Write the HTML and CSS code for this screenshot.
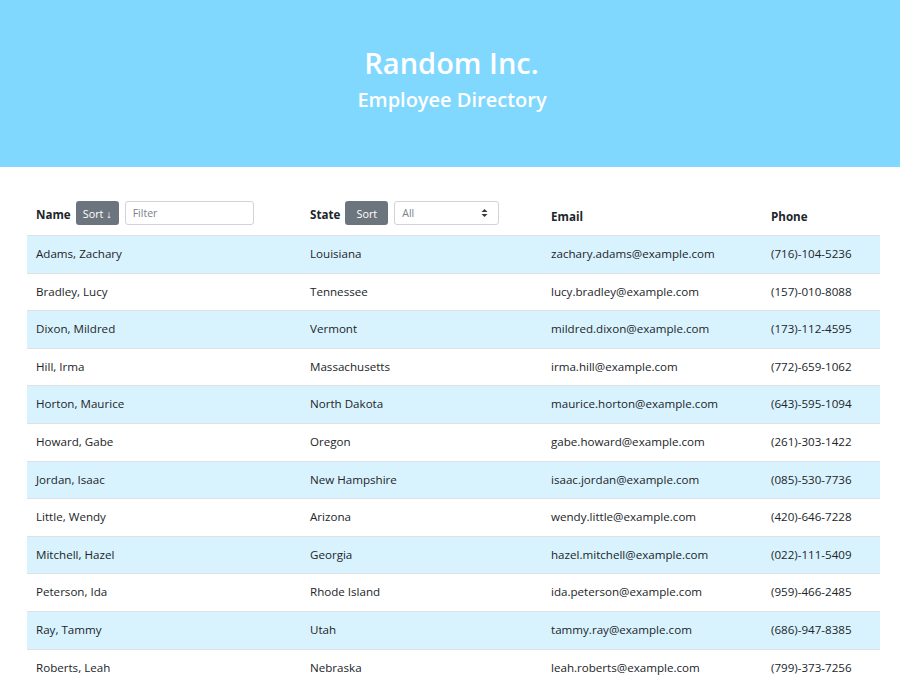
FILE: index.html
```html
<!DOCTYPE html>
<html lang="en">
<head>
<meta charset="utf-8">
<title>Employee Directory</title>
<link rel="stylesheet" href="styles.css">
</head>
<body>
<header class="hero">
  <h1 class="hero-title">Random Inc.</h1>
  <h2 class="hero-sub">Employee Directory</h2>
</header>
<main class="container">
  <table class="dir">
    <colgroup>
      <col class="c-name"><col class="c-state"><col class="c-email"><col class="c-phone">
    </colgroup>
    <thead>
      <tr>
        <th><div class="th-ctl"><span class="lbl">Name</span><button class="btn">Sort ↓</button><input class="field" type="text" placeholder="Filter"></div></th>
        <th><div class="th-ctl"><span class="lbl">State</span><button class="btn">Sort</button><div class="select"><span>All</span><svg width="7" height="10" viewBox="0 0 7 10"><path d="M3.5 1 L6.5 4 H0.5 Z M3.5 9 L0.5 6 H6.5 Z" fill="#343a40"/></svg></div></div></th>
        <th>Email</th>
        <th>Phone</th>
      </tr>
    </thead>
    <tbody>
      <tr><td>Adams, Zachary</td><td>Louisiana</td><td>zachary.adams@example.com</td><td>(716)-104-5236</td></tr>
      <tr><td>Bradley, Lucy</td><td>Tennessee</td><td>lucy.bradley@example.com</td><td>(157)-010-8088</td></tr>
      <tr><td>Dixon, Mildred</td><td>Vermont</td><td>mildred.dixon@example.com</td><td>(173)-112-4595</td></tr>
      <tr><td>Hill, Irma</td><td>Massachusetts</td><td>irma.hill@example.com</td><td>(772)-659-1062</td></tr>
      <tr><td>Horton, Maurice</td><td>North Dakota</td><td>maurice.horton@example.com</td><td>(643)-595-1094</td></tr>
      <tr><td>Howard, Gabe</td><td>Oregon</td><td>gabe.howard@example.com</td><td>(261)-303-1422</td></tr>
      <tr><td>Jordan, Isaac</td><td>New Hampshire</td><td>isaac.jordan@example.com</td><td>(085)-530-7736</td></tr>
      <tr><td>Little, Wendy</td><td>Arizona</td><td>wendy.little@example.com</td><td>(420)-646-7228</td></tr>
      <tr><td>Mitchell, Hazel</td><td>Georgia</td><td>hazel.mitchell@example.com</td><td>(022)-111-5409</td></tr>
      <tr><td>Peterson, Ida</td><td>Rhode Island</td><td>ida.peterson@example.com</td><td>(959)-466-2485</td></tr>
      <tr><td>Ray, Tammy</td><td>Utah</td><td>tammy.ray@example.com</td><td>(686)-947-8385</td></tr>
      <tr><td>Roberts, Leah</td><td>Nebraska</td><td>leah.roberts@example.com</td><td>(799)-373-7256</td></tr>
    </tbody>
  </table>
</main>
</body>
</html>
```
FILE: styles.css
```css
* { box-sizing: border-box; }
html, body { margin: 0; padding: 0; }
body {
  font-family: "Open Sans", "Noto Sans", sans-serif;
  font-size: 11.6px;
  color: #212529;
  background: #fff;
}
.hero {
  background: #80d8ff;
  height: 167px;
  display: flex;
  flex-direction: column;
  align-items: center;
  padding-top: 43px;
  color: #fff;
}
.hero-title {
  margin: 0 0 0 3px;
  font-size: 29px;
  font-weight: 600;
  line-height: 40px;
}
.hero-sub {
  margin: 2px 0 0 4px;
  font-size: 20px;
  font-weight: 600;
  line-height: 30px;
}
.container {
  padding: 32px 20px 0 27px;
}
.dir {
  width: 853px;
  border-collapse: collapse;
  table-layout: fixed;
}
.c-name { width: 274px; }
.c-state { width: 241px; }
.c-email { width: 220px; }
.c-phone { width: 118px; }
.dir th {
  text-align: left;
  font-weight: 700;
  padding: 2px 9px 10px;
  border-bottom: 1px solid #dee2e6;
  vertical-align: bottom;
  line-height: 18px;
}
.dir th:nth-child(n+3) { padding-bottom: 9px; }
.th-ctl {
  display: flex;
  align-items: center;
  gap: 6px;
}
.lbl { margin-right: -1px; padding-top: 3px; }
.btn {
  font-family: inherit;
  font-size: 10.8px;
  color: #fff;
  background: #6c757d;
  border: 0;
  border-radius: 3px;
  height: 24px;
  width: 43px;
  padding: 0;
  text-align: center;
}
.field {
  font-family: inherit;
  font-size: 10.5px;
  width: 129px;
  height: 24px;
  border: 1px solid #ced4da;
  border-radius: 3px;
  padding: 0 7px;
  color: #495057;
}
.field::placeholder { color: #7a8188; }
.select {
  width: 105px;
  height: 24px;
  border: 1px solid #ced4da;
  border-radius: 3px;
  padding: 0 10px 0 7px;
  display: flex;
  align-items: center;
  justify-content: space-between;
  font-size: 10.5px;
  font-weight: 400;
  color: #7a8188;
}
.dir td {
  padding: 9px 9px;
  line-height: 18.6px;
  border-top: 1px solid #dee2e6;
  white-space: nowrap;
}
.dir tbody tr:nth-child(odd) { background: #d9f3fe; }
```
